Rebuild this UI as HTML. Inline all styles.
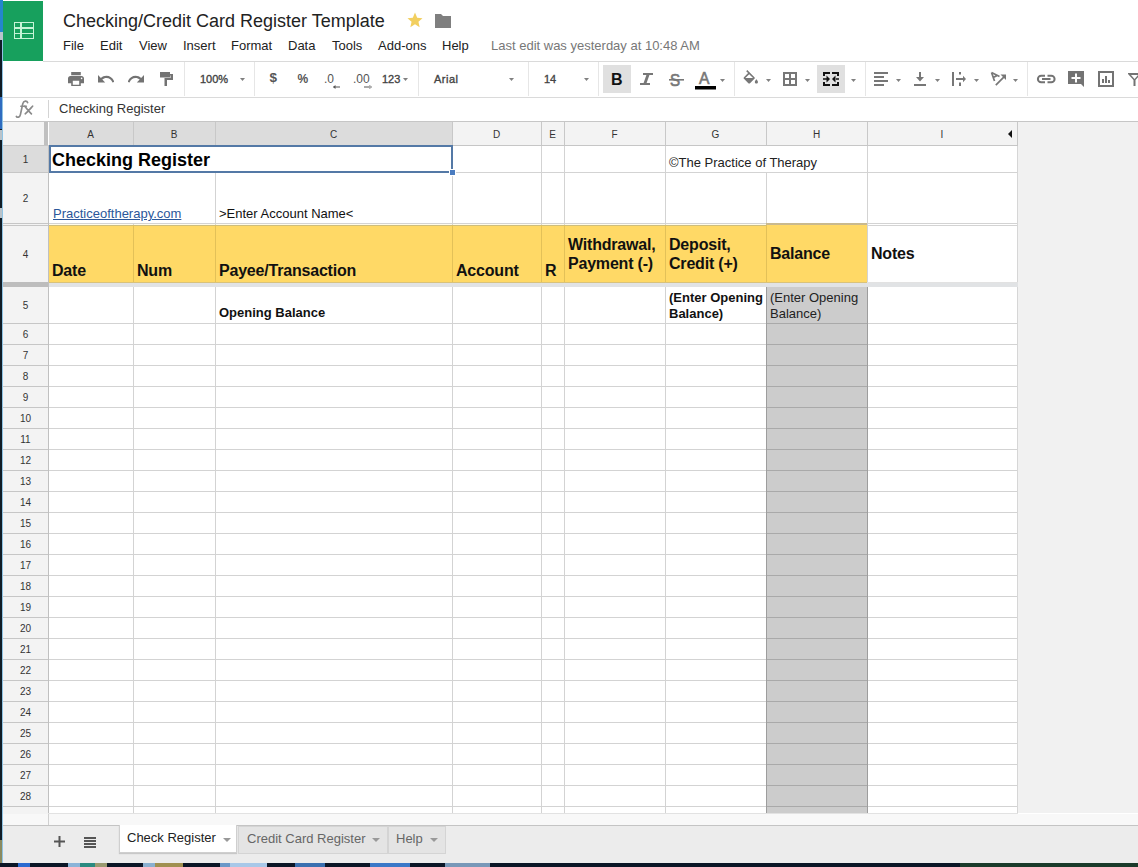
<!DOCTYPE html>
<html><head><meta charset="utf-8">
<style>
*{box-sizing:border-box;margin:0;padding:0}
html,body{width:1138px;height:867px;overflow:hidden;background:#fff;font-family:"Liberation Sans",sans-serif;position:relative}
.a{position:absolute}
.t{position:absolute;white-space:nowrap;line-height:1}
.menu{font-size:13px;color:#222;top:39px}
.sep{position:absolute;top:62px;width:1px;height:34px;background:#e4e4e4}
.dd{position:absolute;width:0;height:0;border-left:3px solid transparent;border-right:3px solid transparent;border-top:3px solid #777;top:78px}
.tb{font-size:11px;color:#444;font-weight:bold}
.colh{position:absolute;top:122px;height:23px;background:#f3f3f3;border-right:1px solid #c8c8c8;font-size:10px;color:#333;text-align:center;line-height:23px}
.rowh{position:absolute;left:3px;width:45px;background:#f3f3f3;border-bottom:1px solid #c8c8c8;font-size:10px;color:#333;text-align:center}
.vl{position:absolute;width:1px;background:#d3d3d3}
.hl{position:absolute;height:1px;background:#d3d3d3}
.hdr{font-size:16px;font-weight:bold;color:#111;letter-spacing:-0.2px}
</style></head><body>
<!-- logo -->
<div class="a" style="left:3px;top:1px;width:40px;height:60px;background:#17a05d"></div>
<div class="a" style="left:14px;top:22px;width:20px;height:17px;border:1.5px solid #c6f4d6"></div>
<div class="a" style="left:14px;top:27px;width:20px;height:1.5px;background:#c6f4d6"></div>
<div class="a" style="left:14px;top:32.5px;width:20px;height:1.5px;background:#c6f4d6"></div>
<div class="a" style="left:20px;top:22px;width:1.5px;height:17px;background:#c6f4d6"></div>

<!-- title -->
<div class="t" style="left:63px;top:12px;font-size:18px;color:#222">Checking/Credit Card Register Template</div>
<svg class="a" style="left:406px;top:11px" width="18" height="18" viewBox="0 0 24 24"><path fill="#f2cf5f" d="M12 2l2.9 6.9 7.1.6-5.4 4.7 1.6 7.3L12 17.7 5.8 21.5l1.6-7.3L2 9.5l7.1-.6z"/></svg>
<svg class="a" style="left:435px;top:13px" width="16" height="15" viewBox="0 0 16 15"><path fill="#7f7f7f" d="M0 1h6l2 2h8v12H0z"/></svg>

<!-- menu -->
<div class="t menu" style="left:63px">File</div>
<div class="t menu" style="left:100px">Edit</div>
<div class="t menu" style="left:139px">View</div>
<div class="t menu" style="left:183px">Insert</div>
<div class="t menu" style="left:231px">Format</div>
<div class="t menu" style="left:288px">Data</div>
<div class="t menu" style="left:332px">Tools</div>
<div class="t menu" style="left:378px">Add-ons</div>
<div class="t menu" style="left:442px">Help</div>
<div class="t menu" style="left:491px;color:#777">Last edit was yesterday at 10:48 AM</div>

<!-- toolbar -->
<div class="a" style="left:43px;top:61px;width:1095px;height:1px;background:#dadada"></div>
<div class="a" style="left:3px;top:97px;width:1135px;height:1px;background:#dadada"></div>
<svg class="a" style="left:0;top:0" width="1138" height="97" viewBox="0 0 1138 97">
<g fill="#e6e6e6">
<rect x="184" y="62" width="1" height="34"/><rect x="254" y="62" width="1" height="34"/>
<rect x="418" y="62" width="1" height="34"/><rect x="528" y="62" width="1" height="34"/>
<rect x="598" y="62" width="1" height="34"/><rect x="734" y="62" width="1" height="34"/>
<rect x="865" y="62" width="1" height="34"/><rect x="1027" y="62" width="1" height="34"/>
</g>
<!-- pressed bg -->
<rect x="603" y="65" width="28" height="28" fill="#e0e0e0"/>
<rect x="817" y="65" width="28" height="28" fill="#e0e0e0"/>
<!-- print -->
<svg x="68" y="72" width="16" height="14" viewBox="2 3 20 17.5" preserveAspectRatio="none"><path fill="#737373" d="M19 8H5c-1.66 0-3 1.34-3 3v6h4v4h12v-4h4v-6c0-1.66-1.34-3-3-3zm-3 11H8v-5h8v5zm3-7c-.55 0-1-.45-1-1s.45-1 1-1 1 .45 1 1-.45 1-1 1zm-1-9H6v4h12V3z"/></svg>
<!-- undo -->
<svg x="98" y="75" width="16" height="8" viewBox="2 7 20 9.5" preserveAspectRatio="none"><path fill="#737373" d="M12.5 8c-2.650 0-5.05.99-6.9 2.6L2 7v9h9l-3.62-3.62c1.39-1.16 3.16-1.88 5.120-1.88 3.54 0 6.55 2.31 7.6 5.5l2.37-.78C21.08 11.03 17.15 8 12.5 8z"/></svg>
<!-- redo -->
<svg x="128" y="75" width="16" height="8" viewBox="2 7 20 9.5" preserveAspectRatio="none"><g transform="translate(24,0) scale(-1,1)"><path fill="#737373" d="M12.5 8c-2.650 0-5.05.99-6.9 2.6L2 7v9h9l-3.62-3.62c1.39-1.16 3.16-1.88 5.120-1.88 3.54 0 6.55 2.31 7.6 5.5l2.37-.78C21.08 11.03 17.15 8 12.5 8z"/></g></svg>
<!-- paint format -->
<path fill="#737373" d="M160 72h10v2h3v6h-6v6h-2.5v-8h6v-2.5h-0.5v2h-10z"/>
<!-- zoom -->
<text x="200" y="83" font-family="Liberation Sans" font-size="11" fill="#444" stroke="#444" stroke-width="0.35">100%</text>
<g fill="#808080">
<path d="M240 78h5l-2.5 3z"/><path d="M403 78h5l-2.5 3z"/><path d="M509 78h5l-2.5 3z"/><path d="M584 78h5l-2.5 3z"/>
<path d="M720 79h5l-2.5 3z"/><path d="M766 79h5l-2.5 3z"/><path d="M805 79h5l-2.5 3z"/><path d="M851 79h5l-2.5 3z"/>
<path d="M896 79h5l-2.5 3z"/><path d="M935 79h5l-2.5 3z"/><path d="M974 79h5l-2.5 3z"/><path d="M1013 79h5l-2.5 3z"/>
</g>
<!-- $ % .0 .00 123 -->
<text x="269.5" y="82.3" font-family="Liberation Sans" font-size="13.5" font-weight="bold" fill="#555">$</text>
<text x="297.5" y="83" font-family="Liberation Sans" font-size="12" font-weight="bold" fill="#555">%</text>
<text x="324" y="83" font-family="Liberation Sans" font-size="12" fill="#555">.0</text>
<path fill="#555" d="M333 86.5h7v1h-7z M333 87l2.5-2v4z"/>
<text x="353" y="83" font-family="Liberation Sans" font-size="12" fill="#555">.00</text>
<path fill="#555" d="M364 86.5h7v1h-7z M372 87l-2.5-2v4z"/>
<text x="382" y="83" font-family="Liberation Sans" font-size="11" fill="#444" stroke="#444" stroke-width="0.35">123</text>
<text x="434" y="83" font-family="Liberation Sans" font-size="11" fill="#444" stroke="#444" stroke-width="0.35" letter-spacing="0.5">Arial</text>
<text x="544" y="83" font-family="Liberation Sans" font-size="11" fill="#444" stroke="#444" stroke-width="0.35">14</text>
<!-- B I S A -->
<text x="611" y="85" font-family="Liberation Sans" font-size="16" font-weight="bold" fill="#111">B</text>
<path fill="#777" d="M643 73h10v2h-3.6l-2.8 8h3.4v2h-10v-2h3.6l2.8-8h-3.4z"/>
<text x="670" y="85.8" font-family="Liberation Sans" font-size="16" fill="#777" stroke="#777" stroke-width="0.6" transform="translate(670 0) scale(0.95 1) translate(-670 0)">S</text>
<rect x="669" y="79" width="15" height="1.6" fill="#777"/>
<text x="699" y="83.8" font-family="Liberation Sans" font-size="16" fill="#777" stroke="#777" stroke-width="0.6" transform="translate(699 0) scale(0.98 1) translate(-699 0)">A</text>
<rect x="695" y="86" width="21" height="3.5" fill="#000"/>
<!-- fill color -->
<svg x="741.2" y="70" width="19.2" height="17.6" viewBox="0 0 24 22"><path fill="#777" d="M16.56 8.94L7.62 0 6.21 1.41l2.38 2.38-5.15 5.15c-.59.59-.59 1.54 0 2.12l5.5 5.5c.29.29.68.44 1.06.44s.77-.15 1.06-.44l5.5-5.5c.59-.58.59-1.53 0-2.12zM5.21 10L10 5.21 14.79 10H5.21zM19 11.5s-2 2.17-2 3.5c0 1.1.9 2 2 2s2-.9 2-2c0-1.33-2-3.5-2-3.5z"/></svg>
<!-- borders -->
<path fill="#777" d="M783 72h14v14h-14z M785 74v4h4v-4z M791 74v4h4v-4z M785 80v4h4v-4z M791 80v4h4v-4z" fill-rule="evenodd"/>
<!-- merge -->
<g fill="#111">
<path d="M823 72h7v2h-5v2h-2z M832 72h7v4h-2v-2h-5z M823 82h2v2h5v2h-7z M837 82h2v4h-7v-2h5z"/>
<path d="M823 78.2h4v1.6h-4z M826.5 75.5l3.5 3.5-3.5 3.5z M835 78.2h4v1.6h-4z M835.5 75.5l-3.5 3.5 3.5 3.5z"/>
</g>
<!-- align left -->
<path fill="#777" d="M874 72h14v2h-14z M874 76h10v2h-10z M874 80h14v2h-14z M874 84h10v2h-10z"/>
<!-- valign bottom -->
<path fill="#777" d="M914 84h12v2h-12z M919 72h2v7h-2z M916 77h8l-4 4.5z"/>
<!-- wrap -->
<path fill="#777" d="M952 72h2v14h-2z M959 72h2v2.5h-2z M959 82.5h2v3.5h-2z M956 78h7.5v2h-7.5z M963 75.8l3 3.2-3 3.2z"/>
<!-- rotate -->
<path fill="none" stroke="#777" stroke-width="1.7" d="M991.5 72.5l8 4 M991.5 72.5l3 8.5 M993.2 77.5l3.5-1.8 M995.8 85.2l9-9"/>
<path fill="#777" d="M1006 74.5v5.5l-5.5-5.5z"/>
<!-- link -->
<path fill="none" stroke="#737373" stroke-width="2" d="M1045 75.7h-3.8a3.3 3.3 0 0 0 0 6.6h3.8 M1047.5 75.7h3.8a3.3 3.3 0 0 1 0 6.6h-3.8 M1042 79h8.5"/>
<!-- comment -->
<path fill="#737373" d="M1068 71h16v16l-3-3h-13z"/>
<path fill="#fff" d="M1075 73.5h2v3.5h3.5v2h-3.5v3.5h-2v-3.5h-3.5v-2h3.5z"/>
<!-- chart -->
<path fill="#737373" fill-rule="evenodd" d="M1098 71h16v16h-16z M1100 73v12h12v-12z"/>
<path fill="#737373" d="M1102 79h2v4h-2z M1105 76h2v7h-2z M1108 80h2v3h-2z"/>
<!-- filter -->
<path fill="#737373" fill-rule="evenodd" d="M1128 73h12v2l-4.5 5v6h-2v-6l-5.5-6z M1131 75l3.5 4 0.5-0.5 3-3.5z"/>
</svg>


<!-- formula bar -->
<svg class="a" style="left:0;top:96px" width="48" height="26" viewBox="0 96 48 26"><g fill="none" stroke="#8a8a8a" stroke-width="1.7" stroke-linecap="round"><path d="M27.6 102.6C27 100.6 23.6 100.2 22.8 103.6L20.4 114.6C19.8 117.6 17.4 117.8 16.4 116.4"/><path d="M20.8 106.2H26.4" stroke-width="1.4"/><path d="M24.8 106.2C26.5 108.5 29 111.5 31.4 113.8M32.6 106.2C30.5 108.5 28 111.5 25.2 113.8"/></g></svg>
<div class="a" style="left:48px;top:100px;width:1px;height:18px;background:#d4d4d4"></div>
<div class="t" style="left:59px;top:102px;font-size:13px;color:#333">Checking Register</div>
<div class="a" style="left:3px;top:121px;width:1135px;height:1px;background:#c6c6c6"></div>

<div class="a" style="left:1018px;top:122px;width:120px;height:691px;background:#f1f1f1"></div>
<div class="a" style="left:3px;top:122px;width:41px;height:23px;background:#f3f3f3"></div>
<div class="a" style="left:44px;top:122px;width:4px;height:23px;background:#c0c0c0"></div>
<div class="a" style="left:49px;top:122px;width:84px;height:23px;background:#dcdcdc"></div>
<div class="a" style="left:133px;top:122px;width:1px;height:23px;background:#c8c8c8"></div>
<div class="t" style="left:48px;width:85px;top:130px;text-align:center;font-size:10px;color:#333">A</div>
<div class="a" style="left:134px;top:122px;width:81px;height:23px;background:#dcdcdc"></div>
<div class="a" style="left:215px;top:122px;width:1px;height:23px;background:#c8c8c8"></div>
<div class="t" style="left:133px;width:82px;top:130px;text-align:center;font-size:10px;color:#333">B</div>
<div class="a" style="left:216px;top:122px;width:236px;height:23px;background:#dcdcdc"></div>
<div class="a" style="left:452px;top:122px;width:1px;height:23px;background:#c8c8c8"></div>
<div class="t" style="left:215px;width:237px;top:130px;text-align:center;font-size:10px;color:#333">C</div>
<div class="a" style="left:453px;top:122px;width:88px;height:23px;background:#f3f3f3"></div>
<div class="a" style="left:541px;top:122px;width:1px;height:23px;background:#c8c8c8"></div>
<div class="t" style="left:452px;width:89px;top:130px;text-align:center;font-size:10px;color:#333">D</div>
<div class="a" style="left:542px;top:122px;width:22px;height:23px;background:#f3f3f3"></div>
<div class="a" style="left:564px;top:122px;width:1px;height:23px;background:#c8c8c8"></div>
<div class="t" style="left:541px;width:23px;top:130px;text-align:center;font-size:10px;color:#333">E</div>
<div class="a" style="left:565px;top:122px;width:100px;height:23px;background:#f3f3f3"></div>
<div class="a" style="left:665px;top:122px;width:1px;height:23px;background:#c8c8c8"></div>
<div class="t" style="left:564px;width:101px;top:130px;text-align:center;font-size:10px;color:#333">F</div>
<div class="a" style="left:666px;top:122px;width:100px;height:23px;background:#f3f3f3"></div>
<div class="a" style="left:766px;top:122px;width:1px;height:23px;background:#c8c8c8"></div>
<div class="t" style="left:665px;width:101px;top:130px;text-align:center;font-size:10px;color:#333">G</div>
<div class="a" style="left:767px;top:122px;width:100px;height:23px;background:#f3f3f3"></div>
<div class="a" style="left:867px;top:122px;width:1px;height:23px;background:#c8c8c8"></div>
<div class="t" style="left:766px;width:101px;top:130px;text-align:center;font-size:10px;color:#333">H</div>
<div class="a" style="left:868px;top:122px;width:149px;height:23px;background:#f3f3f3"></div>
<div class="a" style="left:1017px;top:122px;width:1px;height:23px;background:#c8c8c8"></div>
<div class="t" style="left:867px;width:150px;top:130px;text-align:center;font-size:10px;color:#333">I</div>
<div class="a" style="left:3px;top:145px;width:1015px;height:1px;background:#c6c6c6"></div>
<div class="a" style="left:1008px;top:130px;width:0;height:0;border-top:4px solid transparent;border-bottom:4px solid transparent;border-right:4px solid #111"></div>
<div class="a" style="left:48px;top:146px;width:970px;height:667px;background:#fff"></div>
<div class="a" style="left:3px;top:146px;width:45px;height:679px;background:#f3f3f3"></div>
<div class="a" style="left:3px;top:146px;width:45px;height:26px;background:#dcdcdc"></div>
<div class="a" style="left:48px;top:225px;width:819px;height:57px;background:#ffd966"></div>
<div class="a" style="left:766px;top:287px;width:101px;height:526px;background:#cccccc"></div>
<div class="a" style="left:3px;top:172px;width:45px;height:1px;background:#c6c6c6"></div>
<div class="hl" style="left:48px;top:172px;width:970px"></div>
<div class="t" style="left:3px;width:45px;text-align:center;top:155px;font-size:10px;color:#333">1</div>
<div class="a" style="left:3px;top:223px;width:45px;height:1px;background:#c6c6c6"></div>
<div class="hl" style="left:48px;top:223px;width:970px"></div>
<div class="t" style="left:3px;width:45px;text-align:center;top:194px;font-size:10px;color:#333">2</div>
<div class="a" style="left:3px;top:282px;width:45px;height:1px;background:#c6c6c6"></div>
<div class="t" style="left:3px;width:45px;text-align:center;top:250px;font-size:10px;color:#333">4</div>
<div class="a" style="left:3px;top:323px;width:45px;height:1px;background:#c6c6c6"></div>
<div class="hl" style="left:48px;top:323px;width:970px"></div>
<div class="t" style="left:3px;width:45px;text-align:center;top:301px;font-size:10px;color:#333">5</div>
<div class="a" style="left:3px;top:344px;width:45px;height:1px;background:#c6c6c6"></div>
<div class="hl" style="left:48px;top:344px;width:970px"></div>
<div class="t" style="left:3px;width:45px;text-align:center;top:330px;font-size:10px;color:#333">6</div>
<div class="a" style="left:3px;top:365px;width:45px;height:1px;background:#c6c6c6"></div>
<div class="hl" style="left:48px;top:365px;width:970px"></div>
<div class="t" style="left:3px;width:45px;text-align:center;top:351px;font-size:10px;color:#333">7</div>
<div class="a" style="left:3px;top:386px;width:45px;height:1px;background:#c6c6c6"></div>
<div class="hl" style="left:48px;top:386px;width:970px"></div>
<div class="t" style="left:3px;width:45px;text-align:center;top:372px;font-size:10px;color:#333">8</div>
<div class="a" style="left:3px;top:407px;width:45px;height:1px;background:#c6c6c6"></div>
<div class="hl" style="left:48px;top:407px;width:970px"></div>
<div class="t" style="left:3px;width:45px;text-align:center;top:393px;font-size:10px;color:#333">9</div>
<div class="a" style="left:3px;top:428px;width:45px;height:1px;background:#c6c6c6"></div>
<div class="hl" style="left:48px;top:428px;width:970px"></div>
<div class="t" style="left:3px;width:45px;text-align:center;top:414px;font-size:10px;color:#333">10</div>
<div class="a" style="left:3px;top:449px;width:45px;height:1px;background:#c6c6c6"></div>
<div class="hl" style="left:48px;top:449px;width:970px"></div>
<div class="t" style="left:3px;width:45px;text-align:center;top:435px;font-size:10px;color:#333">11</div>
<div class="a" style="left:3px;top:470px;width:45px;height:1px;background:#c6c6c6"></div>
<div class="hl" style="left:48px;top:470px;width:970px"></div>
<div class="t" style="left:3px;width:45px;text-align:center;top:456px;font-size:10px;color:#333">12</div>
<div class="a" style="left:3px;top:491px;width:45px;height:1px;background:#c6c6c6"></div>
<div class="hl" style="left:48px;top:491px;width:970px"></div>
<div class="t" style="left:3px;width:45px;text-align:center;top:477px;font-size:10px;color:#333">13</div>
<div class="a" style="left:3px;top:512px;width:45px;height:1px;background:#c6c6c6"></div>
<div class="hl" style="left:48px;top:512px;width:970px"></div>
<div class="t" style="left:3px;width:45px;text-align:center;top:498px;font-size:10px;color:#333">14</div>
<div class="a" style="left:3px;top:533px;width:45px;height:1px;background:#c6c6c6"></div>
<div class="hl" style="left:48px;top:533px;width:970px"></div>
<div class="t" style="left:3px;width:45px;text-align:center;top:519px;font-size:10px;color:#333">15</div>
<div class="a" style="left:3px;top:554px;width:45px;height:1px;background:#c6c6c6"></div>
<div class="hl" style="left:48px;top:554px;width:970px"></div>
<div class="t" style="left:3px;width:45px;text-align:center;top:540px;font-size:10px;color:#333">16</div>
<div class="a" style="left:3px;top:575px;width:45px;height:1px;background:#c6c6c6"></div>
<div class="hl" style="left:48px;top:575px;width:970px"></div>
<div class="t" style="left:3px;width:45px;text-align:center;top:561px;font-size:10px;color:#333">17</div>
<div class="a" style="left:3px;top:596px;width:45px;height:1px;background:#c6c6c6"></div>
<div class="hl" style="left:48px;top:596px;width:970px"></div>
<div class="t" style="left:3px;width:45px;text-align:center;top:582px;font-size:10px;color:#333">18</div>
<div class="a" style="left:3px;top:617px;width:45px;height:1px;background:#c6c6c6"></div>
<div class="hl" style="left:48px;top:617px;width:970px"></div>
<div class="t" style="left:3px;width:45px;text-align:center;top:603px;font-size:10px;color:#333">19</div>
<div class="a" style="left:3px;top:638px;width:45px;height:1px;background:#c6c6c6"></div>
<div class="hl" style="left:48px;top:638px;width:970px"></div>
<div class="t" style="left:3px;width:45px;text-align:center;top:624px;font-size:10px;color:#333">20</div>
<div class="a" style="left:3px;top:659px;width:45px;height:1px;background:#c6c6c6"></div>
<div class="hl" style="left:48px;top:659px;width:970px"></div>
<div class="t" style="left:3px;width:45px;text-align:center;top:645px;font-size:10px;color:#333">21</div>
<div class="a" style="left:3px;top:680px;width:45px;height:1px;background:#c6c6c6"></div>
<div class="hl" style="left:48px;top:680px;width:970px"></div>
<div class="t" style="left:3px;width:45px;text-align:center;top:666px;font-size:10px;color:#333">22</div>
<div class="a" style="left:3px;top:701px;width:45px;height:1px;background:#c6c6c6"></div>
<div class="hl" style="left:48px;top:701px;width:970px"></div>
<div class="t" style="left:3px;width:45px;text-align:center;top:687px;font-size:10px;color:#333">23</div>
<div class="a" style="left:3px;top:722px;width:45px;height:1px;background:#c6c6c6"></div>
<div class="hl" style="left:48px;top:722px;width:970px"></div>
<div class="t" style="left:3px;width:45px;text-align:center;top:708px;font-size:10px;color:#333">24</div>
<div class="a" style="left:3px;top:743px;width:45px;height:1px;background:#c6c6c6"></div>
<div class="hl" style="left:48px;top:743px;width:970px"></div>
<div class="t" style="left:3px;width:45px;text-align:center;top:729px;font-size:10px;color:#333">25</div>
<div class="a" style="left:3px;top:764px;width:45px;height:1px;background:#c6c6c6"></div>
<div class="hl" style="left:48px;top:764px;width:970px"></div>
<div class="t" style="left:3px;width:45px;text-align:center;top:750px;font-size:10px;color:#333">26</div>
<div class="a" style="left:3px;top:785px;width:45px;height:1px;background:#c6c6c6"></div>
<div class="hl" style="left:48px;top:785px;width:970px"></div>
<div class="t" style="left:3px;width:45px;text-align:center;top:771px;font-size:10px;color:#333">27</div>
<div class="a" style="left:3px;top:806px;width:45px;height:1px;background:#c6c6c6"></div>
<div class="hl" style="left:48px;top:806px;width:970px"></div>
<div class="t" style="left:3px;width:45px;text-align:center;top:792px;font-size:10px;color:#333">28</div>
<div class="a" style="left:3px;top:225px;width:45px;height:1px;background:#c6c6c6"></div>
<div class="hl" style="left:867px;top:225px;width:151px"></div>
<div class="a" style="left:48px;top:225px;width:718px;height:1px;background:#cdbd7c"></div>
<div class="a" style="left:48px;top:224px;width:819px;height:1px;background:#fffbea"></div>
<div class="vl" style="left:133px;top:146px;height:667px;background:#d3d3d3"></div>
<div class="vl" style="left:215px;top:146px;height:667px;background:#d3d3d3"></div>
<div class="vl" style="left:452px;top:146px;height:667px;background:#d3d3d3"></div>
<div class="vl" style="left:541px;top:146px;height:667px;background:#d3d3d3"></div>
<div class="vl" style="left:564px;top:146px;height:667px;background:#d3d3d3"></div>
<div class="vl" style="left:665px;top:146px;height:667px;background:#d3d3d3"></div>
<div class="vl" style="left:766px;top:146px;height:667px;background:#d3d3d3"></div>
<div class="vl" style="left:867px;top:146px;height:667px;background:#d3d3d3"></div>
<div class="vl" style="left:1017px;top:146px;height:667px;background:#d6d6d6"></div>
<div class="a" style="left:3px;top:282px;width:45px;height:5px;background:#bdbdbd"></div>
<div class="a" style="left:48px;top:282px;width:819px;height:1px;background:#d9c27a"></div>
<div class="a" style="left:867px;top:282px;width:151px;height:1px;background:#e2e2e2"></div>
<div class="a" style="left:48px;top:283px;width:970px;height:4px;background:#e1e3e5"></div>
<div class="a" style="left:48px;top:146px;width:1px;height:679px;background:#c0c0c0"></div>
<div class="a" style="left:48px;top:813px;width:970px;height:1px;background:#e2e2e2"></div>
<div class="a" style="left:133px;top:146px;width:1px;height:26px;background:#fff"></div>
<div class="a" style="left:215px;top:146px;width:1px;height:26px;background:#fff"></div>
<div class="a" style="left:766px;top:146px;width:1px;height:26px;background:#fff"></div>
<div class="a" style="left:133px;top:173px;width:1px;height:50px;background:#fff"></div>
<div class="a" style="left:133px;top:225px;width:1px;height:57px;background:#e3c158"></div>
<div class="a" style="left:215px;top:225px;width:1px;height:57px;background:#e3c158"></div>
<div class="a" style="left:452px;top:225px;width:1px;height:57px;background:#e3c158"></div>
<div class="a" style="left:541px;top:225px;width:1px;height:57px;background:#e3c158"></div>
<div class="a" style="left:564px;top:225px;width:1px;height:57px;background:#e3c158"></div>
<div class="a" style="left:665px;top:225px;width:1px;height:57px;background:#e3c158"></div>
<div class="a" style="left:766px;top:225px;width:1px;height:57px;background:#e3c158"></div>
<div class="a" style="left:766px;top:223px;width:101px;height:2px;background:#c9b98e"></div>
<div class="a" style="left:766px;top:323px;width:101px;height:1px;background:#a9a9a9"></div>
<div class="a" style="left:766px;top:344px;width:101px;height:1px;background:#a9a9a9"></div>
<div class="a" style="left:766px;top:365px;width:101px;height:1px;background:#a9a9a9"></div>
<div class="a" style="left:766px;top:386px;width:101px;height:1px;background:#a9a9a9"></div>
<div class="a" style="left:766px;top:407px;width:101px;height:1px;background:#a9a9a9"></div>
<div class="a" style="left:766px;top:428px;width:101px;height:1px;background:#a9a9a9"></div>
<div class="a" style="left:766px;top:449px;width:101px;height:1px;background:#a9a9a9"></div>
<div class="a" style="left:766px;top:470px;width:101px;height:1px;background:#a9a9a9"></div>
<div class="a" style="left:766px;top:491px;width:101px;height:1px;background:#a9a9a9"></div>
<div class="a" style="left:766px;top:512px;width:101px;height:1px;background:#a9a9a9"></div>
<div class="a" style="left:766px;top:533px;width:101px;height:1px;background:#a9a9a9"></div>
<div class="a" style="left:766px;top:554px;width:101px;height:1px;background:#a9a9a9"></div>
<div class="a" style="left:766px;top:575px;width:101px;height:1px;background:#a9a9a9"></div>
<div class="a" style="left:766px;top:596px;width:101px;height:1px;background:#a9a9a9"></div>
<div class="a" style="left:766px;top:617px;width:101px;height:1px;background:#a9a9a9"></div>
<div class="a" style="left:766px;top:638px;width:101px;height:1px;background:#a9a9a9"></div>
<div class="a" style="left:766px;top:659px;width:101px;height:1px;background:#a9a9a9"></div>
<div class="a" style="left:766px;top:680px;width:101px;height:1px;background:#a9a9a9"></div>
<div class="a" style="left:766px;top:701px;width:101px;height:1px;background:#a9a9a9"></div>
<div class="a" style="left:766px;top:722px;width:101px;height:1px;background:#a9a9a9"></div>
<div class="a" style="left:766px;top:743px;width:101px;height:1px;background:#a9a9a9"></div>
<div class="a" style="left:766px;top:764px;width:101px;height:1px;background:#a9a9a9"></div>
<div class="a" style="left:766px;top:785px;width:101px;height:1px;background:#a9a9a9"></div>
<div class="a" style="left:766px;top:806px;width:101px;height:1px;background:#a9a9a9"></div>
<div class="a" style="left:766px;top:287px;width:1px;height:526px;background:#9d9d9d"></div>
<div class="a" style="left:867px;top:287px;width:1px;height:526px;background:#9d9d9d"></div>
<div class="t" style="left:52px;top:151px;font-size:18px;font-weight:bold;color:#000">Checking Register</div>
<div class="t" style="left:669px;top:156px;font-size:13px;color:#222">©The Practice of Therapy</div>
<div class="t" style="left:53px;top:207px;font-size:13px;color:#2b579a;text-decoration:underline">Practiceoftherapy.com</div>
<div class="t" style="left:219px;top:207px;font-size:13px;color:#111">&gt;Enter Account Name&lt;</div>
<div class="t hdr" style="left:52px;top:263px">Date</div>
<div class="t hdr" style="left:137px;top:263px">Num</div>
<div class="t hdr" style="left:219px;top:263px">Payee/Transaction</div>
<div class="t hdr" style="left:456px;top:263px">Account</div>
<div class="t hdr" style="left:545px;top:263px">R</div>
<div class="t hdr" style="left:568px;top:235px;line-height:19px">Withdrawal,<br>Payment (-)</div>
<div class="t hdr" style="left:669px;top:235px;line-height:19px">Deposit,<br>Credit (+)</div>
<div class="t hdr" style="left:770px;top:246px">Balance</div>
<div class="t hdr" style="left:871px;top:246px">Notes</div>
<div class="t" style="left:219px;top:306px;font-size:13px;font-weight:bold;color:#111">Opening Balance</div>
<div class="t" style="left:669px;top:290px;font-size:13px;font-weight:bold;color:#111;line-height:15.6px">(Enter Opening<br>Balance)</div>
<div class="t" style="left:770px;top:290px;font-size:13px;color:#222;line-height:15.6px">(Enter Opening<br>Balance)</div>
<div class="a" style="left:49px;top:145px;width:404px;height:28px;border:2px solid #5479a6"></div>
<div class="a" style="left:449px;top:169px;width:7px;height:7px;background:#4a7cc0;border:1px solid #fff"></div>

<div class="a" style="left:3px;top:814px;width:1135px;height:11px;background:#f8f8f8"></div>
<div class="a" style="left:48px;top:814px;width:1px;height:11px;background:#d0d0d0"></div>
<div class="a" style="left:3px;top:825px;width:1135px;height:38px;background:#ececec;border-top:1px solid #c4c4c4"></div>
<svg class="a" style="left:54px;top:836px" width="11" height="11" viewBox="0 0 11 11"><path fill="#555" d="M4.5 0h2v4.5H11v2H6.5V11h-2V6.5H0v-2h4.5z"/></svg>
<svg class="a" style="left:84px;top:837px" width="12" height="11" viewBox="0 0 12 11"><path fill="#555" d="M0 0h12v2H0zM0 3h12v2H0zM0 6h12v2H0zM0 9h12v2H0z"/></svg>
<div class="a" style="left:119px;top:825px;width:118px;height:28px;background:#fff;border:1px solid #cfcfcf;border-top:none;box-shadow:0 1px 1px rgba(0,0,0,.15)"></div>
<div class="t" style="left:127px;top:831px;font-size:13px;color:#222">Check Register</div>
<div class="a" style="left:223px;top:838px;width:0;height:0;border-left:4px solid transparent;border-right:4px solid transparent;border-top:4px solid #999"></div>
<div class="a" style="left:238px;top:826px;width:150px;height:28px;background:#e4e4e4;border:1px solid #d4d4d4"></div>
<div class="t" style="left:247px;top:832px;font-size:13px;color:#666">Credit Card Register</div>
<div class="a" style="left:372px;top:838px;width:0;height:0;border-left:4px solid transparent;border-right:4px solid transparent;border-top:4px solid #999"></div>
<div class="a" style="left:388px;top:826px;width:58px;height:28px;background:#e4e4e4;border:1px solid #d4d4d4"></div>
<div class="t" style="left:396px;top:832px;font-size:13px;color:#666">Help</div>
<div class="a" style="left:430px;top:838px;width:0;height:0;border-left:4px solid transparent;border-right:4px solid transparent;border-top:4px solid #999"></div>

<!-- desktop edges -->
<div class="a" style="left:0;top:0;width:3px;height:867px;background:#101c26"></div>
<div class="a" style="left:0;top:0;width:3px;height:32px;background:#2486cc"></div>
<div class="a" style="left:0;top:32px;width:3px;height:8px;background:#b8c4cc"></div>
<div class="a" style="left:0;top:97px;width:3px;height:32px;background:#2f6cc0"></div>
<div class="a" style="left:0;top:130px;width:3px;height:10px;background:#b9c3ca"></div>
<div class="a" style="left:0;top:208px;width:3px;height:10px;background:#b9c3ca"></div>
<div class="a" style="left:0;top:840px;width:3px;height:23px;background:#8a8a60"></div>
<div class="a" style="left:2px;top:40px;width:1px;height:823px;background:#8fc3e3"></div>
<div class="a" style="left:0;top:863px;width:1138px;height:4px;background:#0b1626"></div>
<div class="a" style="left:18px;top:863px;width:12px;height:4px;background:#2a6ad0"></div>
<div class="a" style="left:68px;top:863px;width:12px;height:4px;background:#8ab4d8"></div>
<div class="a" style="left:80px;top:863px;width:15px;height:4px;background:#2a8a80"></div>
<div class="a" style="left:95px;top:863px;width:12px;height:4px;background:#9a9a70"></div>
<div class="a" style="left:143px;top:863px;width:12px;height:4px;background:#8ab0d0"></div>
<div class="a" style="left:155px;top:863px;width:28px;height:4px;background:#a09050"></div>
<div class="a" style="left:220px;top:863px;width:10px;height:4px;background:#6a98c8"></div>
<div class="a" style="left:230px;top:863px;width:37px;height:4px;background:#a8c8e8"></div>
<div class="a" style="left:295px;top:863px;width:30px;height:4px;background:#3a70b0"></div>
<div class="a" style="left:370px;top:863px;width:40px;height:4px;background:#3a78c8"></div>
<div class="a" style="left:445px;top:863px;width:45px;height:4px;background:#7898b8"></div>
<div class="a" style="left:960px;top:863px;width:178px;height:4px;background:#1a3a2a"></div>
</body></html>
